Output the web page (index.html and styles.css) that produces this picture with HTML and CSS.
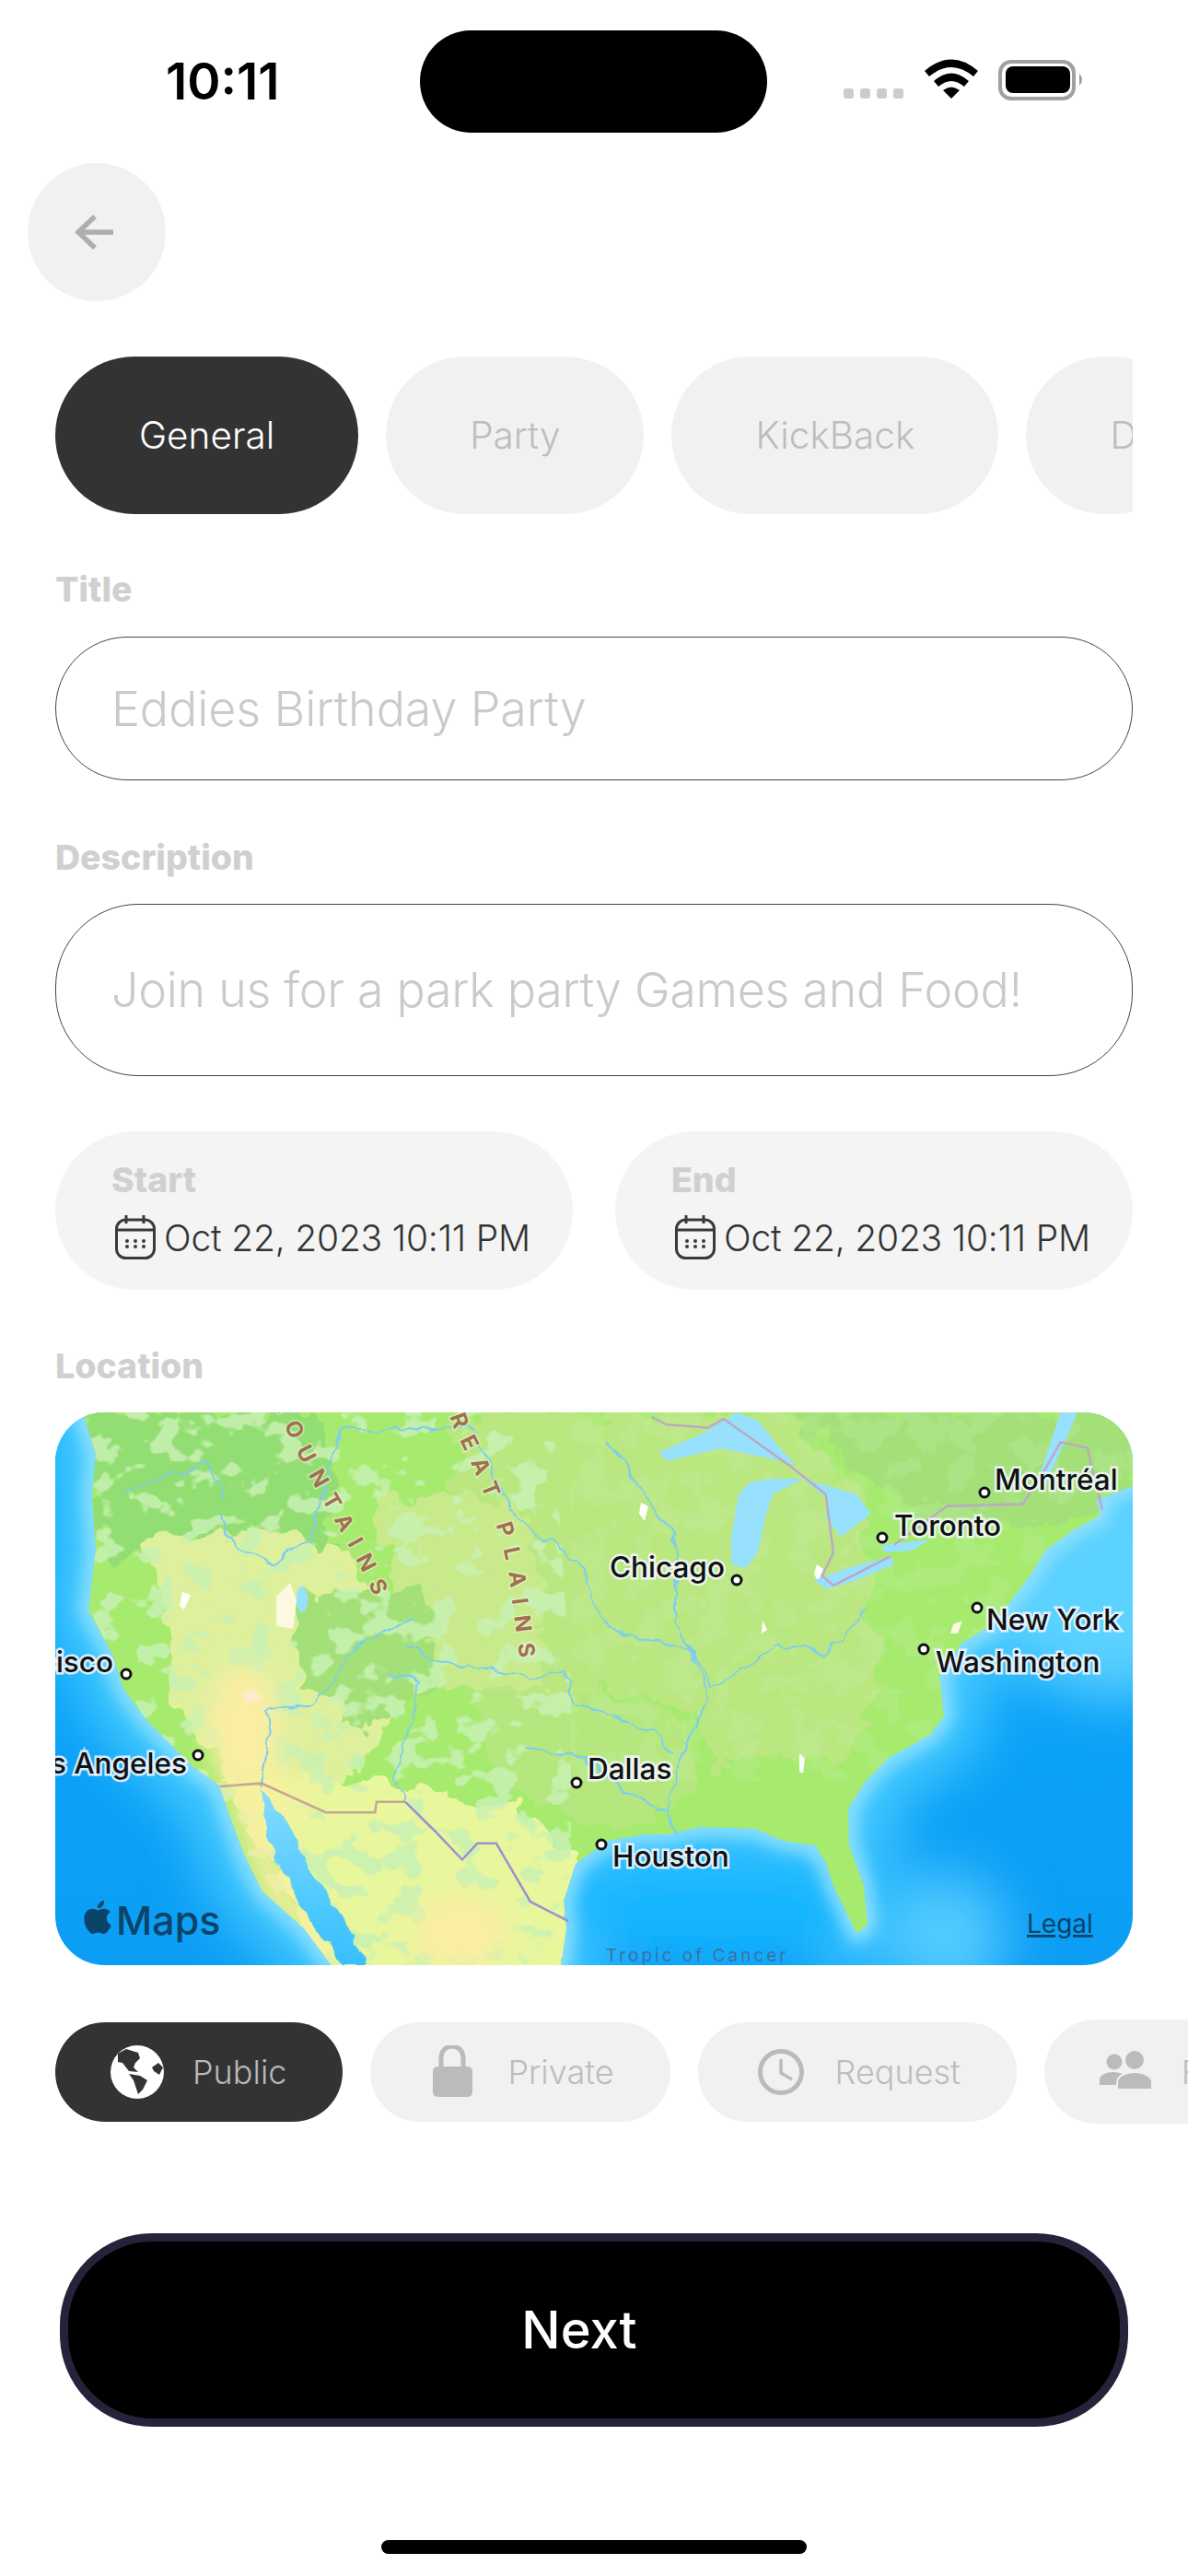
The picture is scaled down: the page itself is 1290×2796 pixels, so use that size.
FILE: index.html
```html
<!DOCTYPE html>
<html lang="en">
<head>
    <meta charset="UTF-8">
    <meta name="viewport" content="width=device-width, initial-scale=1.0">
    <title>New Event</title>
    <link rel="stylesheet" href="styles.css">
</head>
<body>
    <header class="status">
        <span class="time">10:11</span>
        <div class="island"></div>
        <svg class="status-icons" width="262" height="50" viewBox="916 60 262 50">
            <rect x="916" y="96" width="11" height="11" rx="3" fill="#ccc"/>
            <rect x="934" y="96" width="11" height="11" rx="3" fill="#ccc"/>
            <rect x="952" y="96" width="11" height="11" rx="3" fill="#ccc"/>
            <rect x="970" y="96" width="11" height="11" rx="3" fill="#ccc"/>
            <path d="M1004 77Q1033 52 1062 77L1057 83Q1033 63 1009 83Z"/>
            <path d="M1014 88Q1033 71 1052 88L1047 94Q1033 82 1019 94Z"/>
            <path d="M1024 98Q1033 91 1042 98L1033 107Z"/>
            <rect x="1086" y="67" width="80" height="40" rx="12" fill="none" stroke="#a0a0a0" stroke-width="4"/>
            <rect x="1092" y="72" width="70" height="29" rx="8"/>
            <path d="M1172 80Q1178 86 1172 93Z" fill="#999"/>
        </svg>
    </header>

    <button class="back" type="button">
        <svg width="44" height="40" viewBox="0 0 44 40" fill="none" stroke="#aeaeae" stroke-width="5.5">
            <path d="M22 3L4 20L22 37M4 20H42"/>
        </svg>
    </button>

    <div class="categories">
        <div class="pill pill-on">General</div>
        <div class="pill">Party</div>
        <div class="pill">KickBack</div>
        <div class="pill pill-cut">D</div>
    </div>

    <div class="label label-title">Title</div>
    <div class="field field-title">Eddies Birthday Party</div>

    <div class="label label-desc">Description</div>
    <div class="field field-desc">Join us for a park party Games and Food!</div>

    <div class="dates">
        <div class="date-card">
            <div class="label">Start</div>
            <div class="date-value">
                <svg class="cal" width="44" height="48" viewBox="0 0 44 48" fill="none" stroke="#3a3a3a" stroke-width="3">
                    <rect x="1.5" y="5" width="41" height="41.5" rx="10"/>
                    <path d="M2 16H42M12 0V9M31 0V9"/>
                    <g fill="#3a3a3a" stroke="none">
                        <circle cx="13" cy="28" r="2"/><circle cx="22" cy="28" r="2"/><circle cx="31" cy="28" r="2"/>
                        <circle cx="13" cy="34" r="2"/><circle cx="22" cy="34" r="2"/><circle cx="31" cy="34" r="2"/>
                    </g>
                </svg>
                <span>Oct 22, 2023 10:11 PM</span>
            </div>
        </div>
        <div class="date-card">
            <div class="label">End</div>
            <div class="date-value">
                <svg class="cal" width="44" height="48" viewBox="0 0 44 48" fill="none" stroke="#3a3a3a" stroke-width="3">
                    <rect x="1.5" y="5" width="41" height="41.5" rx="10"/>
                    <path d="M2 16H42M12 0V9M31 0V9"/>
                    <g fill="#3a3a3a" stroke="none">
                        <circle cx="13" cy="28" r="2"/><circle cx="22" cy="28" r="2"/><circle cx="31" cy="28" r="2"/>
                        <circle cx="13" cy="34" r="2"/><circle cx="22" cy="34" r="2"/><circle cx="31" cy="34" r="2"/>
                    </g>
                </svg>
                <span>Oct 22, 2023 10:11 PM</span>
            </div>
        </div>
    </div>

    <div class="label label-loc">Location</div>
    <div class="map">
        <svg width="1170" height="600" viewBox="0 0 1170 600">
            <defs>
                <linearGradient id="sea" x1="0" y1="0" x2="0" y2="1">
                    <stop offset="0" stop-color="#0aa6fb"/>
                    <stop offset="1" stop-color="#0c9ef5"/>
                </linearGradient>
                <linearGradient id="gulf" x1="0" y1="0" x2="0" y2="1">
                    <stop offset="0" stop-color="#86dcff"/>
                    <stop offset="1" stop-color="#35bfff"/>
                </linearGradient>
                <clipPath id="landClip"><use href="#land"/></clipPath>
                <path id="land" d="M30 0L44 45L40 90L44 150L36 215L62 262L74 300L100 335L130 365L150 385L178 405L190 440L205 480L225 520L270 560L300 600L549 600L555 560L552 530L565 490L600 465L640 458L665 458L700 450L760 452L790 465L825 470L837 489L845 514L870 565L882 556L878 514L862 470L861 430L880 400L905 375L950 350L965 330L960 285L985 250L1010 235L1030 215L1060 175L1075 150L1105 128L1135 112L1130 95L1170 80L1170 0Z"/>
                <filter id="blur30" x="-20%" y="-20%" width="140%" height="140%"><feGaussianBlur stdDeviation="30"/></filter>
                <filter id="blur8" x="-20%" y="-20%" width="140%" height="140%"><feGaussianBlur stdDeviation="9"/></filter>
                <filter id="blur14" x="-30%" y="-30%" width="160%" height="160%"><feGaussianBlur stdDeviation="14"/></filter>
                <filter id="organic" x="-5%" y="-5%" width="110%" height="110%">
                    <feTurbulence type="fractalNoise" baseFrequency="0.03" numOctaves="3" seed="4"/>
                    <feDisplacementMap in="SourceGraphic" scale="48" xChannelSelector="R" yChannelSelector="G"/>
                </filter>
                <filter id="wiggle" x="-5%" y="-5%" width="110%" height="110%">
                    <feTurbulence type="fractalNoise" baseFrequency="0.045" numOctaves="2" seed="8"/>
                    <feDisplacementMap in="SourceGraphic" scale="16" xChannelSelector="R" yChannelSelector="G"/>
                </filter>
                <filter id="blotchDark" x="0" y="0" width="100%" height="100%">
                    <feTurbulence type="fractalNoise" baseFrequency="0.03 0.036" numOctaves="3" seed="11"/>
                    <feColorMatrix type="matrix" values="0 0 0 0 0.58  0 0 0 0 0.88  0 0 0 0 0.45  14 0 0 0 -7.8"/>
                </filter>
                <filter id="blotchLight" x="0" y="0" width="100%" height="100%">
                    <feTurbulence type="fractalNoise" baseFrequency="0.03" numOctaves="3" seed="23"/>
                    <feColorMatrix type="matrix" values="0 0 0 0 0.62  0 0 0 0 0.9  0 0 0 0 0.47  12 0 0 0 -6.0"/>
                </filter>
                <clipPath id="westClip"><path d="M30 0L540 0L560 300L560 600L300 600L100 340L30 200Z"/></clipPath>
            </defs>

            <rect width="1170" height="600" fill="url(#sea)"/>
            <!-- shallow water glow round the coast -->
            <g filter="url(#blur30)">
                <use href="#land" fill="none" stroke="#45caff" stroke-width="90"/>
                <ellipse cx="1150" cy="190" rx="140" ry="120" fill="#5cd2ff"/>
                <ellipse cx="720" cy="530" rx="200" ry="60" fill="#14b6ff"/>
                <ellipse cx="970" cy="570" rx="60" ry="70" fill="#55ccff"/>
            </g>
            <use href="#land" fill="none" stroke="#97e4ff" stroke-width="18" filter="url(#blur8)"/>

            <use href="#land" fill="#a6ea6e"/>

            <g clip-path="url(#landClip)">
                <g filter="url(#organic)">
                    <path fill="#a3e078" d="M800 0H1170V110L1000 130L900 90Z"/>
                    <path fill="#bae780" d="M434 0H800L880 110L885 220L900 300L860 370L720 385L690 320L600 300L520 320L440 300Z"/>
                    <path fill="#93de72" d="M25 0H280L305 70L290 170L220 130L110 150L60 170L40 90Z"/>
                    <path fill="#c8ea8a" d="M350 90L515 100L535 300L420 300L370 200Z"/>
                    <path fill="#dff09c" d="M105 135L280 130L360 220L370 320L310 410L200 410L120 300Z"/>
                    <path fill="#a3e178" d="M260 200L400 190L415 300L335 340L265 300Z"/>
                    <path fill="#e8f69c" d="M180 400L330 400L440 410L530 440L570 500L550 620L290 620L240 490Z"/>
                    <path fill="#b6e77e" d="M440 310L600 305L680 330L700 420L590 450L500 420Z"/>
                </g>
                <g clip-path="url(#westClip)">
                    <rect width="1170" height="600" fill="#000" filter="url(#blotchDark)" opacity="0.85"/>
                </g>
                <rect x="560" y="0" width="610" height="400" filter="url(#blotchLight)" opacity="0.2"/>
                <g filter="url(#blur14)">
                    <ellipse cx="205" cy="345" rx="38" ry="70" fill="#fbeea2"/>
                    <ellipse cx="440" cy="565" rx="50" ry="40" fill="#fbeea2"/>
                    <ellipse cx="240" cy="420" rx="40" ry="30" fill="#f4f29e"/>
                    <path d="M190 420L215 425L260 520L310 610L285 610L225 520Z" fill="#fbeea2"/>
                </g>
                <!-- snow and salt flats -->
                <g fill="#fff">
                    <path fill="#fdf8e0" d="M240 200L255 185L262 205L258 235L240 232Z"/>
                    <path d="M138 195L147 198L140 214L135 210Z"/>
                    <path d="M636 98L644 102L640 118L634 110Z"/>
                    <path d="M827 165L834 170L828 184L824 175Z"/>
                    <path d="M768 226L773 236L767 240Z"/>
                    <path d="M808 390L808 370L814 376L812 392Z"/>
                    <path d="M975 230L985 226L980 240L972 240Z" fill="#fdf8e0"/>
                    <path d="M204 304L216 300L225 312L205 316Z" fill="#fdeac8"/>
                </g>
            </g>

            <!-- lakes -->
            <g fill="#97e1ff">
                <path d="M656 43L705 22L740 0L763 9L787 39L804 57L763 47L722 39L664 53Z"/>
                <path d="M742 89L754 76L779 72L812 72L779 89L771 114L763 152L750 169L734 165L734 135Z"/>
                <path d="M812 72L870 89L886 110L853 135L837 114L837 93Z"/>
                <path d="M824 182L861 169L907 156L911 165L870 182L837 192Z"/>
                <path d="M898 144L950 138L930 150L900 152Z"/>
                <ellipse cx="268" cy="203" rx="6" ry="14"/>
                <path d="M1092 0L1110 0L1075 80L1066 76Z"/>
            </g>

            <!-- gulf of california -->
            <path filter="url(#wiggle)" d="M222 405L248 440L280 500L325 565L338 600L312 600L292 575L262 530L238 480L230 440Z" fill="url(#gulf)"/>

            <!-- rivers and borders are traced in the coordinates of the 1568 tall crop -->
            <g filter="url(#wiggle)" stroke="#7ccdf3" stroke-width="2" fill="none">
                <g transform="translate(-60 -33) scale(0.8227 0.4209)">
                    <path vector-effect="non-scaling-stroke" d="M290 340L300 400L360 470L410 400L450 120L540 125L620 110L680 350L770 480L800 640L910 690L940 790"/>
                    <path vector-effect="non-scaling-stroke" d="M800 150L890 400L890 600L910 700L935 800L900 960L880 1110L890 1170"/>
                    <path vector-effect="non-scaling-stroke" d="M940 790L1030 680L1090 700L1140 590"/>
                    <path vector-effect="non-scaling-stroke" d="M550 610L480 670L410 830L350 850L355 950L345 1035"/>
                    <path vector-effect="non-scaling-stroke" d="M690 935L770 970L830 1060L880 1110"/>
                    <path vector-effect="non-scaling-stroke" d="M510 750L555 770L520 1030L535 1083"/>
                    <path vector-effect="non-scaling-stroke" d="M540 680L570 720L700 760L745 740L760 830L860 900L890 960"/>
                    <path vector-effect="non-scaling-stroke" d="M160 280L270 210L300 300"/>
                </g>
            </g>
            <g transform="translate(-60 -33) scale(0.8227 0.4209)" fill="none">
                <g stroke="#bda9c4" stroke-width="2.5">
                    <path vector-effect="non-scaling-stroke" d="M860 90L880 110L935 118L955 95L1045 220L1090 290L1100 440L1085 500L1100 525L1175 450"/>
                    <path vector-effect="non-scaling-stroke" d="M1180 420L1250 320L1350 315L1375 240L1400 155L1435 170L1455 330"/>
                </g>
                <path stroke="#c4a890" stroke-width="2.5" vector-effect="non-scaling-stroke" d="M290 1043L345 1035L430 1110L495 1110L497 1083L535 1083"/>
                <path stroke="#9b8fd6" stroke-width="2.5" vector-effect="non-scaling-stroke" d="M535 1083L575 1160L610 1232L630 1190L655 1190L700 1340L750 1390"/>
            </g>

            <path id="mountainsLine" d="M234 -18L253 24C285 95 322 140 356 222" fill="none"/>
            <path id="plainsLine" d="M418 -24L434 20C470 90 492 150 496 205L510 310" fill="none"/>
            <text class="range"><textPath href="#mountainsLine">MOUNTAINS</textPath></text>
            <text class="range"><textPath href="#plainsLine">GREAT PLAINS</textPath></text>

            <text class="tropic" x="598" y="596">Tropic of Cancer</text>

            <text class="city" x="1020" y="84">Montréal</text>
            <text class="city" x="911" y="134">Toronto</text>
            <text class="city" x="602" y="179">Chicago</text>
            <text class="city" x="1011" y="236">New York</text>
            <text class="city" x="956" y="282">Washington</text>
            <text class="city city-end" x="63" y="282">San Francisco</text>
            <text class="city city-end" x="143" y="392">Los Angeles</text>
            <text class="city" x="578" y="398">Dallas</text>
            <text class="city" x="605" y="493">Houston</text>

            <g fill="#fff" stroke="#111" stroke-width="3">
                <circle cx="1009" cy="87" r="5"/>
                <circle cx="898" cy="136" r="5"/>
                <circle cx="740" cy="182" r="5"/>
                <circle cx="1001" cy="212" r="5"/>
                <circle cx="943" cy="257" r="5"/>
                <circle cx="77" cy="284" r="5"/>
                <circle cx="155" cy="372" r="5"/>
                <circle cx="566" cy="402" r="5"/>
                <circle cx="593" cy="469" r="5"/>
            </g>

            <path transform="translate(28 530) scale(1.5)" fill="#0b4468" d="M12.152 6.896c-.948 0-2.415-1.078-3.96-1.04-2.04.027-3.91 1.183-4.961 3.014-2.117 3.675-.546 9.103 1.519 12.09 1.013 1.454 2.208 3.09 3.792 3.039 1.52-.065 2.09-.987 3.935-.987 1.831 0 2.35.987 3.96.948 1.637-.026 2.676-1.48 3.676-2.948 1.156-1.688 1.636-3.325 1.662-3.415-.039-.013-3.182-1.221-3.22-4.857-.026-3.04 2.48-4.494 2.597-4.559-1.429-2.09-3.623-2.324-4.39-2.376-2-.156-3.675 1.09-4.61 1.09zM15.53 3.83c.843-1.012 1.4-2.427 1.245-3.83-1.207.052-2.662.805-3.532 1.818-.78.896-1.454 2.338-1.273 3.714 1.338.104 2.715-.688 3.559-1.701"/>
            <text class="maps-word" x="66" y="567">Maps</text>
            <text class="legal" x="1055" y="565">Legal</text>
        </svg>
    </div>

    <div class="visibility">
        <div class="vis vis-on">
            <svg class="vis-icon" width="58" height="58" viewBox="0 0 58 58">
                <circle cx="29" cy="29" r="29" fill="#fff"/>
                <g fill="#333">
                    <path d="M8 9L17 4L30 8L32 14L27 19L25 24L30 29L20 28L13 19L8 18Z"/>
                    <path d="M20 31L32 33L40 38L35 48L30 53L27 44L25 38Z"/>
                    <path d="M52 19L57 24L53 32L47 28L45 24Z"/>
                </g>
            </svg>
            <span>Public</span>
        </div>
        <div class="vis">
            <svg class="vis-icon" width="58" height="58" viewBox="0 0 58 58">
                <path d="M17 24V14a12 12 0 0 1 24 0V24" transform="translate(0 -1)" fill="none" stroke="#bbb" stroke-width="5"/>
                <rect x="8" y="23" width="43" height="33" rx="5" fill="#bbb"/>
            </svg>
            <span>Private</span>
        </div>
        <div class="vis">
            <svg class="vis-icon" width="58" height="58" viewBox="0 0 58 58" fill="none" stroke="#bbb" stroke-width="5">
                <circle cx="30" cy="29" r="22.5"/>
                <path d="M30 15V30L42 37" stroke-width="3.5"/>
            </svg>
            <span>Request</span>
        </div>
        <div class="vis vis-big">
            <svg class="vis-icon" width="58" height="58" viewBox="0 0 58 58" fill="#bbb">
                <circle cx="16" cy="18" r="8.5"/>
                <circle cx="38" cy="16" r="10"/>
                <path d="M0 43V37C0 32 8 29 15 29C19 29 22 30 25 31C20 33 18 37 18 43Z"/>
                <path d="M20 47V40C20 34 30 30 38 30C46 30 56 34 56 40V47Z"/>
            </svg>
            <span>Friends</span>
        </div>
    </div>

    <button class="next" type="button">Next</button>
    <div class="home-bar"></div>
</body>
</html>
```

FILE: styles.css
```css
html, body {
    margin: 0;
    padding: 0;
}
body {
    width: 1290px;
    height: 2796px;
    overflow: hidden;
    background: #fff;
    font-family: Inter, "Liberation Sans", sans-serif;
}
.status {
    display: flex;
    height: 144px;
    padding: 33px 0 0 180px;
    box-sizing: border-box;
}
.time {
    width: 276px;
    height: 111px;
    line-height: 111px;
    font-size: 55px;
    font-weight: 600;
    color: #000;
}
.island {
    width: 377px;
    height: 111px;
    border-radius: 56px;
    background: #000;
}
.status-icons {
    margin: 27px 0 0 83px;
}
.back {
    display: flex;
    align-items: center;
    justify-content: center;
    width: 150px;
    height: 150px;
    margin: 33px 0 0 30px;
    padding: 0 4px 0 0;
    border: none;
    border-radius: 50%;
    background: #f1f1f1;
}
.categories {
    display: flex;
    gap: 30px;
    width: 1170px;
    height: 171px;
    margin: 60px 0 0 60px;
    overflow: hidden;
}
.pill {
    display: flex;
    align-items: center;
    flex-shrink: 0;
    padding: 0 91px;
    border-radius: 86px;
    background: #f1f1f1;
    color: #bdbdbd;
    font-size: 40.5px;
    font-weight: 300;
}
.pill-on {
    background: #333;
    color: #fff;
}
.pill-cut {
    padding-right: 60px;
}
.label {
    height: 44px;
    line-height: 44px;
    font-size: 37.5px;
    font-weight: 800;
    color: #d0d0d0;
}
.label-title {
    margin: 60px 0 0 60px;
}
.label-desc {
    margin: 62px 0 0 60px;
}
.label-loc {
    margin: 61px 0 0 60px;
}
.field {
    display: flex;
    align-items: center;
    width: 1170px;
    margin: 29px 0 0 60px;
    padding-left: 60px;
    box-sizing: border-box;
    border: 1px solid #444;
    color: #cacaca;
    font-weight: 350;
    font-size: 52px;
}
.field-title {
    height: 156px;
    border-radius: 78px;
    letter-spacing: -0.1px;
}
.field-desc {
    height: 187px;
    margin-top: 28px;
    border-radius: 90px;
    letter-spacing: -0.3px;
}
.dates {
    display: flex;
    gap: 46px;
    width: 1170px;
    margin: 60px 0 0 60px;
}
.date-card {
    flex: 1;
    height: 172px;
    padding: 31px 0 0 61px;
    box-sizing: border-box;
    border-radius: 86px;
    background: #f4f4f4;
}
.date-value {
    display: flex;
    align-items: center;
    gap: 9px;
    margin-top: 16px;
    padding-left: 4px;
    color: #333;
    font-size: 39px;
    font-weight: 300;
    letter-spacing: -0.2px;
}
.cal {
    flex-shrink: 0;
}
.map {
    width: 1170px;
    height: 600px;
    margin: 28px 0 0 60px;
    border-radius: 54px;
    overflow: hidden;
}
.map svg {
    display: block;
}
.city {
    font-size: 31.5px;
    font-weight: 500;
    fill: #111;
    stroke: #f4f8ff;
    stroke-width: 5px;
    stroke-opacity: 0.85;
    paint-order: stroke;
}
.city-end {
    text-anchor: end;
}
.range {
    font-size: 24px;
    font-weight: 700;
    letter-spacing: 12px;
    fill: #a0704f;
    stroke: #eef6d8;
    stroke-width: 3px;
    stroke-opacity: 0.6;
    paint-order: stroke;
}
.tropic {
    font-size: 19px;
    letter-spacing: 3px;
    fill: #3f6fa6;
}
.maps-word {
    font-size: 43px;
    font-weight: 500;
    fill: #0b4468;
}
.legal {
    font-size: 28px;
    fill: #0b4468;
    text-decoration: underline;
}
.visibility {
    display: flex;
    align-items: center;
    gap: 30px;
    width: 1290px;
    height: 113px;
    margin-top: 59px;
    padding-left: 60px;
    box-sizing: border-box;
    overflow: hidden;
}
.vis {
    display: flex;
    align-items: center;
    flex-shrink: 0;
    gap: 31px;
    height: 108px;
    padding: 0 61px 0 60px;
    border-radius: 54px;
    background: #f1f1f1;
    color: #bdbdbd;
    font-size: 36px;
    font-weight: 300;
}
.vis-on {
    background: #333;
    color: #b8b8b8;
}
.vis-big {
    height: 113px;
    border-radius: 57px;
}
.vis-icon {
    flex-shrink: 0;
}
.next {
    display: block;
    width: 1160px;
    height: 210px;
    margin: 119px 0 0 65px;
    border: 9px solid #24233a;
    border-radius: 100px;
    background: #000;
    color: #fff;
    font-family: Inter, "Liberation Sans", sans-serif;
    font-size: 56px;
    font-weight: 500;
    padding-right: 38px;
}
.home-bar {
    width: 462px;
    height: 15px;
    margin: 123px 0 0 414px;
    border-radius: 8px;
    background: #000;
}
```
